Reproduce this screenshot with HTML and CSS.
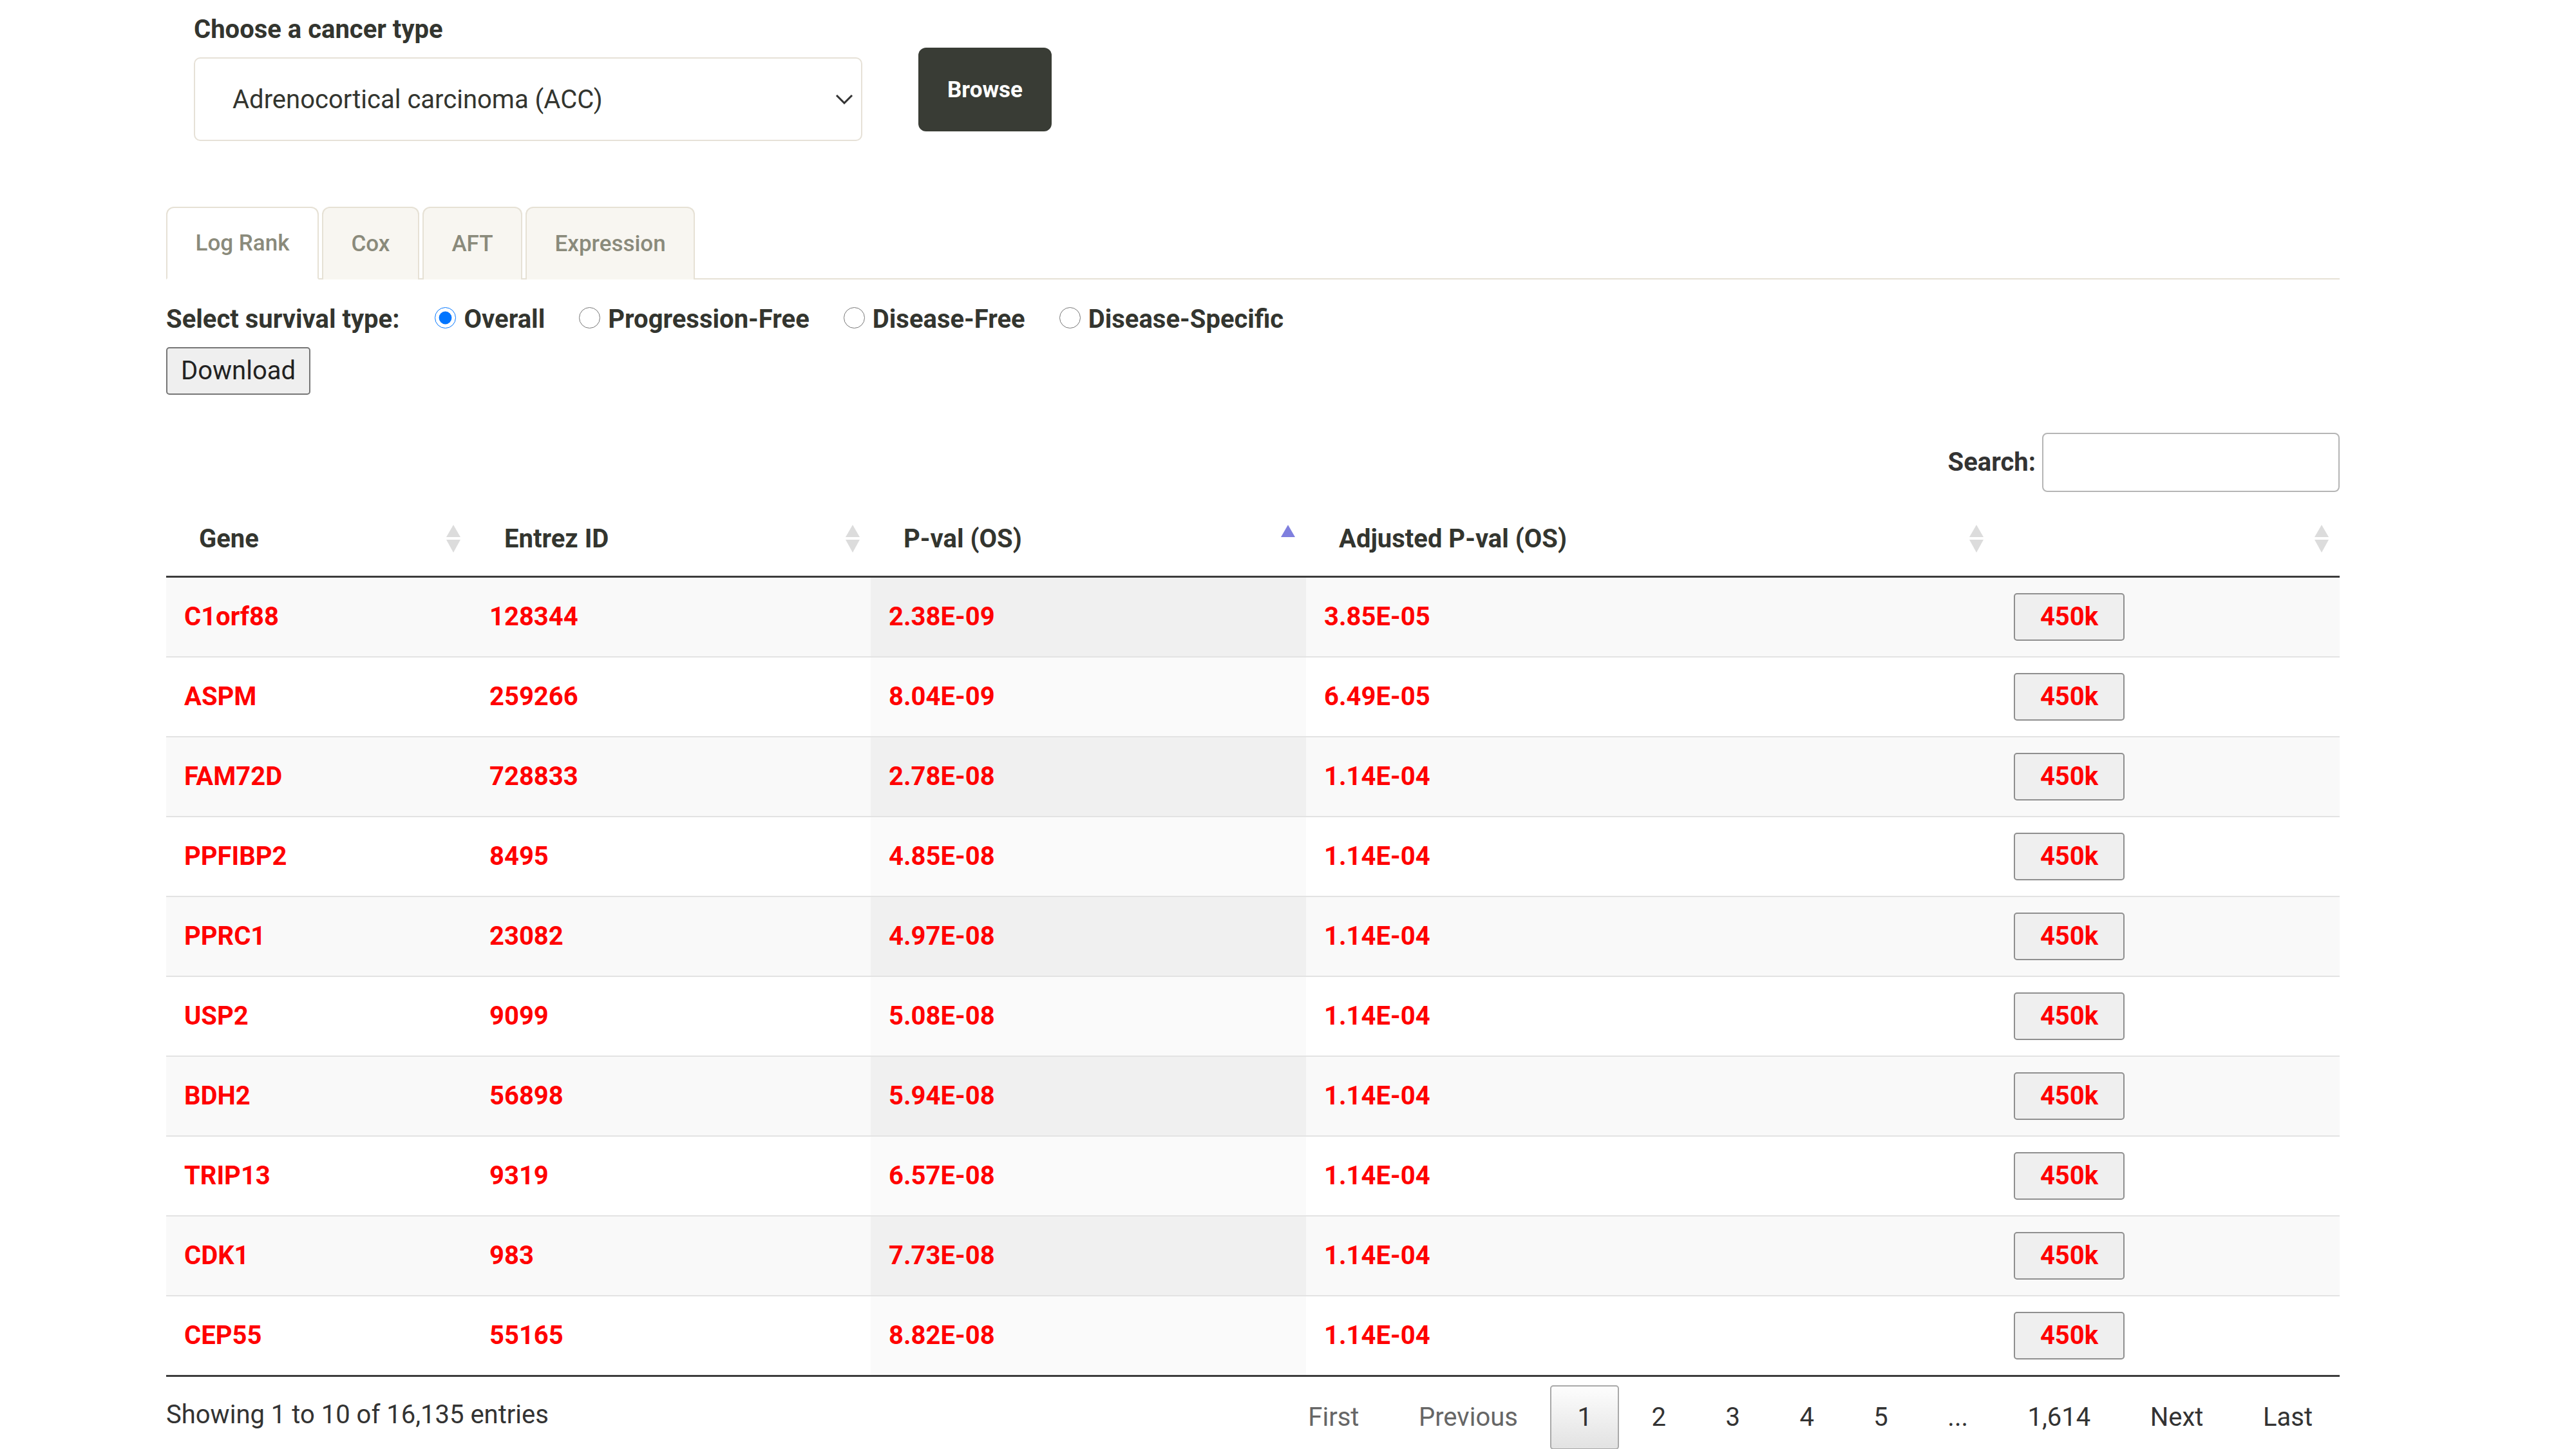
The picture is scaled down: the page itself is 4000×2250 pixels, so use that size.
FILE: index.html
```html
<!DOCTYPE html>
<html lang="en">
<head>
<meta charset="utf-8">
<title>Survival browser</title>
<link rel="stylesheet" href="styles.css">
</head>
<body>
<div class="page">
  <div class="picker">
    <div class="picker-col">
      <label class="picker-label">Choose a cancer type</label>
      <div class="select">
        <span>Adrenocortical carcinoma (ACC)</span>
        <svg class="chev" width="28" height="16" viewBox="0 0 28 16"><path d="M2 2 L14 14 L26 2" fill="none" stroke="#333" stroke-width="3"/></svg>
      </div>
    </div>
    <button class="browse">Browse</button>
  </div>

  <div class="tabs">
    <div class="tab active">Log Rank</div>
    <div class="tab">Cox</div>
    <div class="tab">AFT</div>
    <div class="tab">Expression</div>
  </div>

  <div class="survival">
    <span class="survival-label">Select survival type:</span>
    <label class="opt"><input type="radio" name="st" checked>Overall</label>
    <label class="opt"><input type="radio" name="st">Progression-Free</label>
    <label class="opt"><input type="radio" name="st">Disease-Free</label>
    <label class="opt"><input type="radio" name="st">Disease-Specific</label>
  </div>
  <button class="download">Download</button>

  <div class="search-row">
    <label class="search-label">Search:</label>
    <input class="search-input" type="search">
  </div>

  <table class="grid">
    <colgroup>
      <col class="c-gene"><col class="c-entrez"><col class="c-pval"><col class="c-adj"><col class="c-btn">
    </colgroup>
    <thead>
      <tr>
        <th><div class="th-inner"><span>Gene</span><svg class="sort" width="22" height="43" viewBox="0 0 22 43"><path d="M11 0 L22 19 L0 19 Z" fill="#dcdcdc"/><path d="M0 23 L22 23 L11 43 Z" fill="#dcdcdc"/></svg></div></th>
        <th><div class="th-inner"><span>Entrez ID</span><svg class="sort" width="22" height="43" viewBox="0 0 22 43"><path d="M11 0 L22 19 L0 19 Z" fill="#dcdcdc"/><path d="M0 23 L22 23 L11 43 Z" fill="#dcdcdc"/></svg></div></th>
        <th><div class="th-inner"><span>P-val (OS)</span><svg class="sort" width="22" height="43" viewBox="0 0 22 43"><path d="M11 0 L22 19 L0 19 Z" fill="#7f7fde"/></svg></div></th>
        <th><div class="th-inner"><span>Adjusted P-val (OS)</span><svg class="sort" width="22" height="43" viewBox="0 0 22 43"><path d="M11 0 L22 19 L0 19 Z" fill="#dcdcdc"/><path d="M0 23 L22 23 L11 43 Z" fill="#dcdcdc"/></svg></div></th>
        <th><div class="th-inner"><span></span><svg class="sort" width="22" height="43" viewBox="0 0 22 43"><path d="M11 0 L22 19 L0 19 Z" fill="#dcdcdc"/><path d="M0 23 L22 23 L11 43 Z" fill="#dcdcdc"/></svg></div></th>
      </tr>
    </thead>
    <tbody>
      <tr class="odd"><td>C1orf88</td><td>128344</td><td class="sorted">2.38E-09</td><td>3.85E-05</td><td><button class="chip">450k</button></td></tr>
      <tr class="even"><td>ASPM</td><td>259266</td><td class="sorted">8.04E-09</td><td>6.49E-05</td><td><button class="chip">450k</button></td></tr>
      <tr class="odd"><td>FAM72D</td><td>728833</td><td class="sorted">2.78E-08</td><td>1.14E-04</td><td><button class="chip">450k</button></td></tr>
      <tr class="even"><td>PPFIBP2</td><td>8495</td><td class="sorted">4.85E-08</td><td>1.14E-04</td><td><button class="chip">450k</button></td></tr>
      <tr class="odd"><td>PPRC1</td><td>23082</td><td class="sorted">4.97E-08</td><td>1.14E-04</td><td><button class="chip">450k</button></td></tr>
      <tr class="even"><td>USP2</td><td>9099</td><td class="sorted">5.08E-08</td><td>1.14E-04</td><td><button class="chip">450k</button></td></tr>
      <tr class="odd"><td>BDH2</td><td>56898</td><td class="sorted">5.94E-08</td><td>1.14E-04</td><td><button class="chip">450k</button></td></tr>
      <tr class="even"><td>TRIP13</td><td>9319</td><td class="sorted">6.57E-08</td><td>1.14E-04</td><td><button class="chip">450k</button></td></tr>
      <tr class="odd"><td>CDK1</td><td>983</td><td class="sorted">7.73E-08</td><td>1.14E-04</td><td><button class="chip">450k</button></td></tr>
      <tr class="even"><td>CEP55</td><td>55165</td><td class="sorted">8.82E-08</td><td>1.14E-04</td><td><button class="chip">450k</button></td></tr>
    </tbody>
  </table>

  <div class="footer">
    <div class="info">Showing 1 to 10 of 16,135 entries</div>
    <div class="pager">
      <span class="pg disabled">First</span>
      <span class="pg disabled">Previous</span>
      <span class="pg current">1</span>
      <span class="pg">2</span>
      <span class="pg">3</span>
      <span class="pg">4</span>
      <span class="pg">5</span>
      <span class="pg ellipsis">...</span>
      <span class="pg">1,614</span>
      <span class="pg">Next</span>
      <span class="pg">Last</span>
    </div>
  </div>
</div>
</body>
</html>
```

FILE: styles.css
```css
* { box-sizing: border-box; }
html, body { margin: 0; background: #fff; }
body {
  font-family: Roboto, "Liberation Sans", Arial, sans-serif;
  font-size: 40px;
  color: #333;
}
.page {
  width: 3375px;
  margin-left: 258px;
  padding-top: 16px;
}

/* picker */
.picker { display: flex; align-items: flex-start; padding-left: 43px; }
.picker-col { width: 1038px; }
.picker-label { display: block; font-weight: 700; line-height: 60px; color: #33352f; }
.select {
  margin-top: 13px;
  height: 130px;
  border: 2.5px solid #e6e1d7;
  border-radius: 10px;
  display: flex;
  align-items: center;
  justify-content: space-between;
  padding: 0 12px 0 58px;
  color: #33352f;
}
.chev { display: block; }
.browse {
  margin-left: 87px;
  margin-top: 58px;
  width: 207px;
  height: 130px;
  background: #393c35;
  color: #fff;
  border: 0;
  border-radius: 12px;
  font-family: Roboto, "Liberation Sans", sans-serif;
  font-weight: 700;
  font-size: 35px;
}

/* tabs */
.tabs {
  display: flex;
  gap: 5px;
  margin-top: 102px;
  border-bottom: 2.5px solid #e6e1d5;
}
.tab {
  height: 113px;
  padding: 0 43.5px;
  display: flex;
  align-items: center;
  border: 2.5px solid #e6e1d5;
  border-bottom: 0;
  border-radius: 12px 12px 0 0;
  background: #f8f6f1;
  color: #8a8a7b;
  font-size: 35px;
  font-weight: 500;
  margin-bottom: -2.5px;
}
.tab.active { background: #fff; border-bottom: 2.5px solid #fff; }

/* survival */
.survival {
  display: flex;
  align-items: center;
  margin-top: 32px;
  line-height: 60px;
  font-weight: 700;
  color: #33352f;
}
.survival-label { margin-right: 55px; }
.opt { display: flex; align-items: center; margin-right: 53px; }
.opt input { width: 33px; height: 33px; margin: 0 12px 4px 0; }

.download {
  display: block;
  margin-top: 13px;
  height: 74px;
  padding: 0 21px;
  font-family: Roboto, "Liberation Sans", sans-serif;
  font-size: 40px;
  color: #222;
  background: #efefef;
  border: 2.5px solid #767676;
  border-radius: 5px;
}

/* search */
.search-row {
  display: flex;
  justify-content: flex-end;
  align-items: center;
  margin-top: 59px;
}
.search-label { font-weight: 700; margin-right: 10px; }
.search-input {
  width: 462px;
  height: 92px;
  border: 2.5px solid #b5b5b5;
  border-radius: 8px;
  font-size: 40px;
}

/* table */
.grid {
  width: 100%;
  margin-top: 16px;
  border-collapse: collapse;
  table-layout: fixed;
}
.c-gene { width: 474px; }
.c-entrez { width: 620px; }
.c-pval { width: 676px; }
.c-adj { width: 1069px; }
.c-btn { width: 536px; }
.grid th {
  text-align: left;
  font-weight: 700;
  padding: 25px 17px 25px 51px;
  line-height: 64px;
  border-bottom: 3px solid #3c3c3c;
  color: #33352f;
}
.th-inner { display: flex; align-items: center; justify-content: space-between; }
.sort { display: block; }
.grid td {
  padding: 24px 30px 24px 28px;
  line-height: 48px;
  color: #ff0000;
  font-weight: 700;
  border-bottom: 2px solid #e3e3e3;
  vertical-align: middle;
}
.grid td:last-child { padding-left: 30px; }
.grid tr.odd td { background: #f9f9f9; }
.grid tr.odd td.sorted { background: #f0f0f0; }
.grid tr.even td.sorted { background: #fafafa; }
.grid tbody tr:last-child td { border-bottom: 3px solid #3c3c3c; }
.chip {
  display: block;
  height: 74px;
  width: 172px;
  padding: 0;
  background: #efefef;
  border: 2.5px solid #8f8f8f;
  border-radius: 5px;
  color: #ff0000;
  font-family: Roboto, "Liberation Sans", sans-serif;
  font-weight: 700;
  font-size: 40px;
}

/* footer */
.footer {
  display: flex;
  justify-content: space-between;
  align-items: center;
  padding-top: 13px;
}
.info { color: #333; padding-bottom: 8px; }
.pager { display: flex; }
.pg {
  padding: 20px 40px;
  margin-left: 8.5px;
  border: 2.5px solid transparent;
  border-radius: 5px;
  line-height: 56px;
  color: #333;
}
.pg.disabled { color: #666; }
.pg.current {
  border-color: #a9a9a9;
  background: linear-gradient(#fdfdfd, #e2e2e2);
}
```
